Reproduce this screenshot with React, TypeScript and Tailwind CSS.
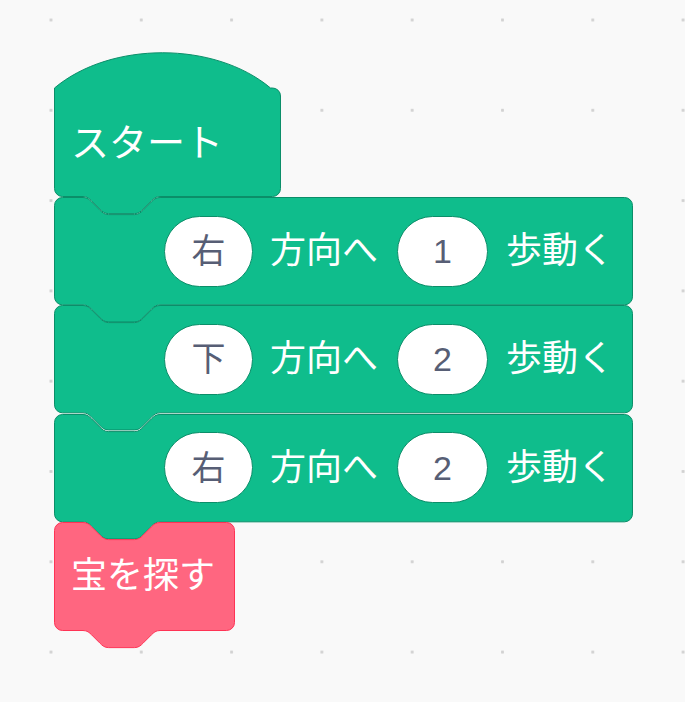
import React from 'react';

const S = 2.14;
const R = 8;
const NX = 29;
const GREEN = { fill: '#0fbd8c', stroke: '#0b8e69' };
const PINK = { fill: '#ff6680', stroke: '#ff3355' };

const notch = (s: number) =>
  `c ${2 * s},0 ${3 * s},${s} ${4 * s},${2 * s} l ${4 * s},${4 * s} c ${s},${s} ${2 * s},${2 * s} ${4 * s},${2 * s} h ${12 * s} c ${2 * s},0 ${3 * s},${-s} ${4 * s},${-2 * s} l ${4 * s},${-4 * s} c ${s},${-s} ${2 * s},${-2 * s} ${4 * s},${-2 * s}`;

const tab = (s: number) =>
  `c ${-2 * s},0 ${-3 * s},${s} ${-4 * s},${2 * s} l ${-4 * s},${4 * s} c ${-s},${s} ${-2 * s},${2 * s} ${-4 * s},${2 * s} h ${-12 * s} c ${-2 * s},0 ${-3 * s},${-s} ${-4 * s},${-2 * s} l ${-4 * s},${-4 * s} c ${-s},${-s} ${-2 * s},${-2 * s} ${-4 * s},${-2 * s}`;

// right side, bottom tab and left side, shared by every block
const lower = (w: number, h: number) =>
  `H ${w - R - 0.5} a ${R} ${R} 0 0 1 ${R} ${R} V ${h - R - 0.5} a ${R} ${R} 0 0 1 ${-R} ${R} H ${NX + 36 * S} ${tab(S)} H ${R + 0.5} a ${R} ${R} 0 0 1 ${-R} ${-R} Z`;

const stackPath = (w: number, h: number) =>
  `M 0.5 ${R + 0.5} a ${R} ${R} 0 0 1 ${R} ${-R} H ${NX} ${notch(S)} ${lower(w, h)}`;

const hatPath = (w: number, h: number) => `M 0.5 36 c 56,-47 160,-47 216,0 ${lower(w, h)}`;

const Shape = ({ d, w, h, color }: { d: string; w: number; h: number; color: { fill: string; stroke: string } }) => (
  <svg className="absolute left-0 top-0 overflow-visible pointer-events-none" width={w} height={h + 20}>
    <path d={d} fill={color.fill} stroke={color.stroke} strokeWidth={1} />
  </svg>
);

const Pill = ({ value, width }: { value: string; width: string }) => (
  <div
    className={`${width} h-[71px] shrink-0 rounded-full bg-white border border-[#0b8e69] flex items-center justify-center text-[#575e75] text-[34px] leading-none`}
  >
    {value}
  </div>
);

const MoveBlock = ({ dir, steps }: { dir: string; steps: string }) => (
  <div className="relative w-[579px] h-[108.33px]">
    <Shape d={stackPath(579, 108.33)} w={579} h={108.33} color={GREEN} />
    <div className="relative h-full flex items-center pl-[110px] text-white text-[36px] leading-none">
      <Pill value={dir} width="w-[89px]" />
      <span className="ml-[17px]">方向へ</span>
      <div className="ml-[19px]">
        <Pill value={steps} width="w-[91px]" />
      </div>
      <span className="ml-[18px]">歩動く</span>
    </div>
  </div>
);

export default function App() {
  return (
    <div className="w-full h-[702px] overflow-hidden bg-[#f9f9f9] bg-[radial-gradient(circle,#d2d2d2_1.3px,transparent_1.8px)] bg-size-[90.3px_90.3px] bg-position-[5.85px_65.15px] font-['Liberation_Sans','Noto_Sans_CJK_JP',sans-serif]">
      <div className="flex flex-col items-start pt-[52px] pl-[54px]">
        <div className="relative w-[227px] h-[145px]">
          <Shape d={hatPath(227, 145)} w={227} h={145} color={GREEN} />
          <div className="relative h-full pt-[36px] flex items-center pl-[17px] text-white text-[38px] leading-none">
            スタート
          </div>
        </div>
        <MoveBlock dir="右" steps="1" />
        <MoveBlock dir="下" steps="2" />
        <MoveBlock dir="右" steps="2" />
        <div className="relative w-[181px] h-[109px]">
          <Shape d={stackPath(181, 109)} w={181} h={109} color={PINK} />
          <div className="relative h-full flex items-center pl-[17px] text-white text-[36px] leading-none">
            宝を探す
          </div>
        </div>
      </div>
    </div>
  );
}
